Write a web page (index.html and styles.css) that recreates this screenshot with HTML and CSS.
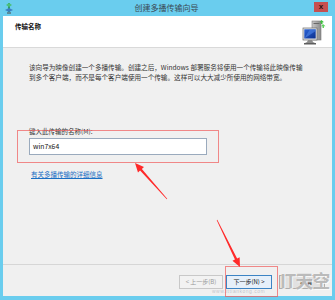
FILE: index.html
```html
<!DOCTYPE html>
<html lang="zh-CN">
<head>
<meta charset="utf-8">
<title>创建多播传输向导</title>
<link rel="stylesheet" href="styles.css">
</head>
<body>
<div class="window">
  <div class="titlebar">
    <svg class="app-icon" width="8" height="11" viewBox="0 0 8 11">
      <rect x="3" y="0" width="2" height="9" fill="#2f9b6a"/>
      <path d="M1 2 L4 0 L7 2 L4 4 Z" fill="#4cc07a"/>
      <path d="M0 7 L4 5 L8 7 L4 9 Z" fill="#3b7fc4"/>
      <rect x="2" y="9" width="4" height="2" fill="#5a8a9a"/>
    </svg>
    <div class="title">创建多播传输向导</div>
    <div class="close">x</div>
  </div>
  <div class="client">
    <div class="header">
      <div class="header-title">传输名称</div>
      <svg class="header-icon" width="25" height="27" viewBox="0 0 25 27">
        <defs>
          <linearGradient id="tw" x1="0" x2="1">
            <stop offset="0" stop-color="#c8c8c8"/>
            <stop offset="1" stop-color="#8a8a8a"/>
          </linearGradient>
          <linearGradient id="sc" x1="0" y1="0" x2="1" y2="1">
            <stop offset="0" stop-color="#2a64d8"/>
            <stop offset="1" stop-color="#0c2f8c"/>
          </linearGradient>
        </defs>
        <rect x="10" y="3" width="9" height="19" fill="url(#tw)" stroke="#7a7a7a" stroke-width="0.6"/>
        <rect x="11.5" y="5" width="6" height="1" fill="#6a6a6a"/>
        <rect x="1" y="10" width="14" height="12" fill="#e8e8e8" stroke="#6a6a6a" stroke-width="0.7"/>
        <rect x="2.3" y="11.3" width="11.4" height="9.2" fill="url(#sc)"/>
        <path d="M2.3 20.5 L8 11.3 L13.7 11.3 L13.7 13 Z" fill="#4f86e8" opacity="0.6"/>
        <path d="M6 22 L10 22 L11 24 L13 25 L3 25 L5 24 Z" fill="#8c8c8c"/>
        <rect x="2" y="25" width="12" height="1.5" fill="#5f5f5f"/>
        <path d="M19.5 2 L22 4.2 L20.5 4.2 L20.5 6 L19 6 L19 4.2 L17.5 4.2 Z" fill="#3fbf3f"/>
        <path d="M21 6 L23.5 8.2 L22 8.2 L22 10 L20.5 10 L20.5 8.2 L19 8.2 Z" fill="#5fd35f"/>
      </svg>
    </div>
    <div class="body">
      <p class="desc">该向导为映像创建一个多播传输。创建之后，Windows 部署服务将使用一个传输将此映像传输<br>到多个客户端，而不是每个客户端使用一个传输。这样可以大大减少所使用的网络带宽。</p>
      <div class="label">键入此传输的名称(M):</div>
      <div class="input">win7x64</div>
      <a class="link" href="#">有关多播传输的详细信息</a>
    </div>
    <div class="footer">
      <div class="btn btn-disabled">&lt; 上一步(B)</div>
      <div class="btn btn-default">下一步(N) &gt;</div>
      <div class="btn btn-cancel">取消</div>
    </div>
  </div>

  <div class="mark mark-field"></div>
  <div class="mark mark-next"></div>
  <svg class="arrows" width="335" height="300" viewBox="0 0 335 300">
    <polygon fill="#ff2a2a" points="167.22,198.8 141.88,168.92 143.97,167.06 135,163 137.99,172.38 140.08,170.52 166.78,199.2"/>
    <polygon fill="#ff2a2a" points="216.73,220.13 234.96,259.45 232.45,260.68 240,267 239.63,257.16 237.12,258.39 217.27,219.87"/>
  </svg>
  <div class="watermark">IT天空</div>
  <div class="watermark-small">www.ittiankong.com</div>
</div>
</body>
</html>
```

FILE: styles.css
```css
html, body {
  margin: 0;
  padding: 0;
}

body {
  width: 335px;
  height: 300px;
  overflow: hidden;
  font-family: "Noto Sans CJK SC", "Noto Sans", sans-serif;
  color: #222;
}

.window {
  position: relative;
  width: 335px;
  height: 300px;
  box-sizing: border-box;
  background: #6acdee;
  padding: 0 3px 4px 3px;
  display: flex;
  flex-direction: column;
}

.titlebar {
  height: 16px;
  display: flex;
  align-items: center;
  position: relative;
}

.app-icon {
  margin-left: 2px;
  margin-top: 1px;
}

.title {
  flex: 1;
  text-align: center;
  font-size: 8px;
  line-height: 16px;
  color: #3a4a55;
  padding-left: 6px;
}

.close {
  width: 14px;
  height: 10px;
  margin-right: 4px;
  margin-top: -3px;
  background: #c75050;
  color: #2a1010;
  font-family: "Liberation Sans", sans-serif;
  font-weight: bold;
  font-size: 8px;
  line-height: 9px;
  text-align: center;
}

.client {
  flex: 1;
  background: #f0f0f0;
  display: flex;
  flex-direction: column;
}

.header {
  height: 31px;
  background: #ffffff;
  border-bottom: 1px solid #d9d9d9;
  display: flex;
  justify-content: space-between;
  padding: 0 5px 0 12px;
}

.header-title {
  font-size: 6.5px;
  font-weight: bold;
  line-height: 10px;
  margin-top: 5px;
  color: #111;
}

.header-icon {
  margin-top: 2px;
}

.body {
  flex: 1;
  padding-left: 26px;
  display: flex;
  flex-direction: column;
  align-items: flex-start;
}

.desc {
  margin: 14px 0 0 0;
  font-size: 6.6px;
  line-height: 10px;
  color: #333;
  white-space: nowrap;
}

.label {
  margin-top: 44px;
  font-size: 6.5px;
  line-height: 10px;
  color: #333;
}

.input {
  margin-top: 2px;
  width: 178px;
  height: 17px;
  box-sizing: border-box;
  border: 1px solid #9aaabd;
  background: #fff;
  font-size: 6.8px;
  line-height: 15px;
  padding-left: 3px;
  color: #111;
}

.link {
  margin-top: 14px;
  font-size: 6.5px;
  line-height: 10px;
  color: #1a6fc4;
  text-decoration: underline;
  padding-left: 2px;
}

.footer {
  height: 32px;
  box-sizing: border-box;
  border-top: 1px solid #d6d6d6;
  display: flex;
  justify-content: flex-end;
  align-items: flex-start;
  padding: 10px 7px 0 0;
}

.btn {
  height: 14px;
  box-sizing: border-box;
  font-size: 6px;
  line-height: 12px;
  text-align: center;
}

.btn-disabled {
  width: 44px;
  border: 1px solid #c8c8c8;
  background: #f2f2f2;
  color: #9a9a9a;
}

.btn-default {
  width: 46px;
  margin-left: 3px;
  border: 1px solid #3c84c4;
  background: #e6f0fa;
  color: #111;
}

.btn-cancel {
  width: 46px;
  margin-left: 7px;
  border: 1px solid #adadad;
  background: #e1e1e1;
  color: #111;
  padding-left: 8px;
}

.mark {
  position: absolute;
  border: 1px solid rgba(240, 90, 90, 0.7);
  box-sizing: border-box;
}

.mark-field {
  left: 17px;
  top: 130px;
  width: 202px;
  height: 33px;
}

.mark-next {
  left: 225px;
  top: 266px;
  width: 53px;
  height: 31px;
}

.arrows {
  position: absolute;
  left: 0;
  top: 0;
}

.watermark {
  position: absolute;
  left: 280px;
  top: 268px;
  font-size: 18px;
  line-height: 24px;
  font-weight: bold;
  color: rgba(120, 120, 120, 0.5);
  text-shadow: 0 0 1px #fff, 1px 1px 0 rgba(255,255,255,0.7);
  letter-spacing: -1px;
}

.watermark-small {
  position: absolute;
  left: 212px;
  top: 288px;
  font-family: "Liberation Sans", sans-serif;
  font-size: 5px;
  line-height: 6px;
  color: rgba(120, 120, 140, 0.4);
  letter-spacing: 0.5px;
}
```
